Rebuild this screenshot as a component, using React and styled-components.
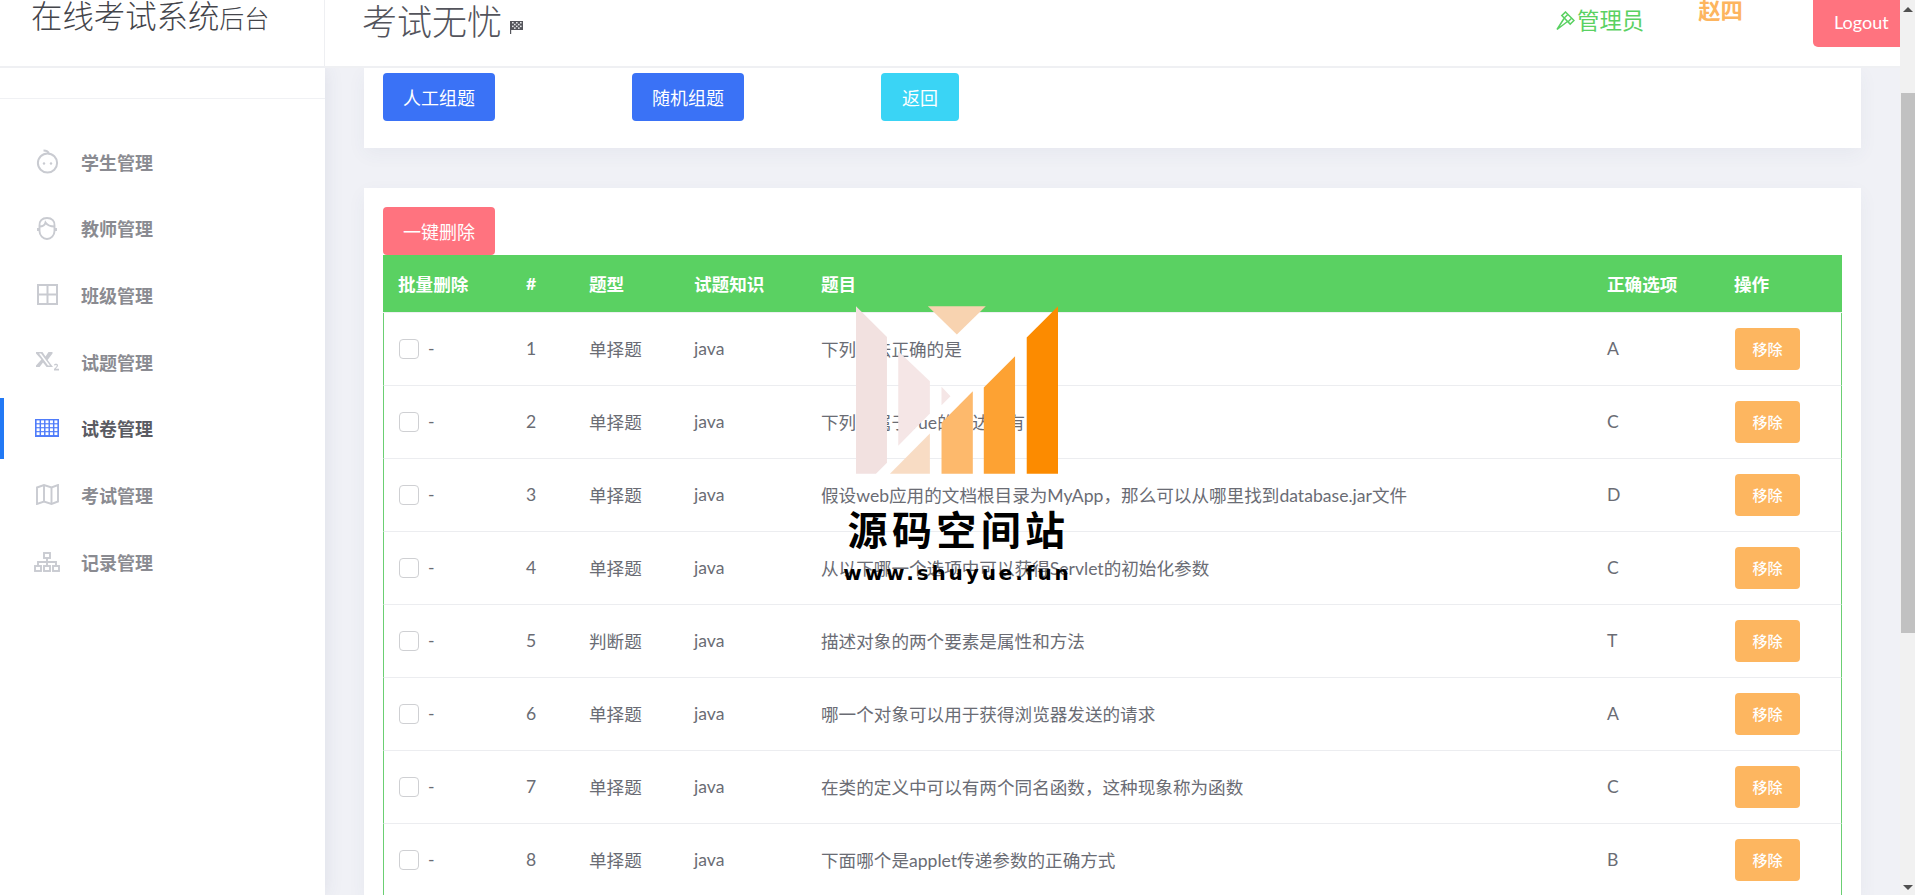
import React from "react";
import styled, { createGlobalStyle } from "styled-components";

const Global = createGlobalStyle`
  html, body { margin: 0; padding: 0; height: 100%; overflow: hidden; background: #fff; }
  body { font-family: Lato, "Noto Sans CJK SC", sans-serif; }
  * { box-sizing: border-box; }
`;

const Shell = styled.div`
  position: relative;
  display: flex;
  width: 1915px;
  height: 895px;
  overflow: hidden;
`;
const Page = styled.div`
  display: flex;
  flex-direction: column;
  width: 1900px;
  height: 100%;
`;
const TopBar = styled.header`
  display: flex;
  align-items: flex-start;
  flex: none;
  height: 68px;
  background: #fff;
  border-bottom: 2px solid #eff0f3;
  position: relative;
  z-index: 2;
`;
const Brand = styled.div`
  width: 325px;
  height: 66px;
  padding-left: 31px;
  border-right: 1px solid #eeeff2;
  font-size: 31.4px;
  line-height: 32px;
  font-weight: 300;
  color: #44454b;
  flex: none;
  small { font-size: 25px; }
`;
const PageTitle = styled.div`
  margin-left: 37px;
  font-size: 35px;
  line-height: 42px;
  font-weight: 300;
  color: #53545c;
  display: flex;
  align-items: center;
  gap: 8px;
`;
const Role = styled.div`
  display: flex;
  align-items: center;
  margin-left: auto;
  font-size: 22.4px;
  line-height: 42px;
  color: #5ad162;
`;
const UserName = styled.div`
  margin-left: 54px;
  font-size: 22.4px;
  line-height: 22px;
  font-weight: 700;
  color: #fdb55f;
`;
const Logout = styled.button`
  margin-left: 70px;
  width: 87px;
  height: 47px;
  padding: 0 10px 3px 21px;
  border: 0;
  border-radius: 0 0 0 5px;
  background: #ff737f;
  color: #fff;
  font: 400 18px Lato, sans-serif;
  text-align: left;
`;
const Body = styled.div`
  display: flex;
  flex: 1;
  min-height: 0;
`;
const Sidebar = styled.aside`
  flex: none;
  width: 325px;
  background: #fff;
  position: relative;
  z-index: 1;
  box-shadow: 0 0 18px rgba(60, 70, 110, 0.1);
`;
const SideRule = styled.div`
  height: 31px;
  border-bottom: 1px solid #f0f1f4;
`;
const NavList = styled.nav`
  display: flex;
  flex-direction: column;
  gap: 5.7px;
  padding-top: 32px;
`;
const NavItem = styled.a`
  position: relative;
  display: flex;
  align-items: center;
  height: 61px;
  padding-left: 34px;
  font-size: 18px;
  font-weight: 700;
  color: ${(p) => (p.$active ? "#5a5b62" : "#8a8b91")};
  &::before {
    content: "";
    display: ${(p) => (p.$active ? "block" : "none")};
    position: absolute;
    left: 0;
    top: 0;
    bottom: 0;
    width: 4px;
    background: #2279f5;
  }
`;
const NavIcon = styled.span`
  display: flex;
  align-items: center;
  justify-content: center;
  width: 26px;
  height: 26px;
  margin-right: 21px;
  color: #c9cbd1;
`;
const Main = styled.main`
  flex: 1;
  min-width: 0;
  padding: 0 39px;
  background: #f0f1f6;
  overflow: hidden;
`;
const Card = styled.section`
  background: #fff;
  padding: ${(p) => p.$pad};
  margin-bottom: 40px;
  box-shadow: 0 6px 18px rgba(60, 70, 110, 0.05);
`;
const ButtonRow = styled.div`
  display: flex;
  gap: 137px;
`;
const ActionButton = styled.button`
  display: block;
  width: ${(p) => p.$w || 112}px;
  height: 48px;
  padding: 0;
  border: 0;
  border-radius: 4px;
  background: ${(p) => p.$bg};
  color: #fff;
  font: 400 18px Lato, "Noto Sans CJK SC", sans-serif;
`;
const Table = styled.table`
  width: 1459px;
  border-collapse: separate;
  border-spacing: 0;
  table-layout: fixed;
`;
const Th = styled.th`
  height: 58px;
  padding: 0 15px 1px;
  background: #5ad162;
  border-bottom: 1px solid #eef0f2;
  color: #fff;
  font-size: 17.6px;
  font-weight: 700;
  text-align: left;
`;
const Row = styled.tr`
  td:first-child { border-left: 1px solid #6bcf73; }
  td:last-child { border-right: 1px solid #6bcf73; }
`;
const Td = styled.td`
  height: 73px;
  padding: 0 15px 1px;
  border-bottom: 1px solid #ecedf0;
  color: #6a6c74;
  font-size: 17.6px;
  font-weight: 400;
  white-space: nowrap;
`;
const SelectCell = styled.div`
  display: flex;
  align-items: center;
  gap: 9px;
`;
const Check = styled.input.attrs({ type: "checkbox" })`
  appearance: none;
  width: 20px;
  height: 20px;
  margin: 0;
  border: 1px solid #cfd0d3;
  border-radius: 4px;
  background: #fff;
`;
const RemoveButton = styled.button`
  display: block;
  width: 65px;
  height: 42px;
  margin-left: 1px;
  padding: 0;
  border: 0;
  border-radius: 4px;
  background: #fdb660;
  color: #fff;
  font: 500 15px "Noto Sans CJK SC", sans-serif;
`;
const ScrollTrack = styled.div`
  display: flex;
  flex-direction: column;
  align-items: flex-end;
  flex: none;
  width: 15px;
  height: 100%;
  padding: 7px 0 5px;
  background: #f1f1f1;
`;
const Arrow = styled.i`
  display: block;
  margin-right: 2px;
  margin-top: ${(p) => (p.$down ? "auto" : "0")};
  border-left: 5px solid transparent;
  border-right: 5px solid transparent;
  border-${(p) => (p.$down ? "top" : "bottom")}: 5px solid #505050;
`;
const Thumb = styled.div`
  width: 14px;
  height: 540px;
  margin-top: 81px;
  background: #c1c1c1;
`;
const Watermark = styled.div`
  position: absolute;
  left: 840px;
  top: 306px;
  width: 235px;
  display: flex;
  flex-direction: column;
  align-items: center;
  color: #000;
  pointer-events: none;
  z-index: 3;
`;
const WatermarkLogo = styled.svg`
  display: block;
  width: 202px;
  height: 168px;
  margin-left: -1px;
`;
const WatermarkTitle = styled.div`
  margin-top: 29px;
  margin-left: 2px;
  font-size: 40px;
  line-height: 50px;
  font-weight: 700;
  letter-spacing: 4.4px;
  white-space: nowrap;
  font-family: "Noto Sans CJK SC", sans-serif;
`;
const WatermarkUrl = styled.div`
  margin-top: 8px;
  font-size: 20px;
  line-height: 24px;
  font-weight: 700;
  letter-spacing: 2.9px;
  white-space: nowrap;
  font-family: "DejaVu Sans", sans-serif;
`;

const BabyIcon = () => (
  <svg width="23" height="25" viewBox="0 0 23 25" fill="none" stroke="currentColor" strokeWidth="2">
    <circle cx="11.5" cy="14" r="9.6" />
    <path d="M7.5 1.5c3 0 5.5 1.2 5 3.6" />
    <circle cx="8" cy="14.5" r="1.2" fill="currentColor" stroke="none" />
    <circle cx="15" cy="14.5" r="1.2" fill="currentColor" stroke="none" />
  </svg>
);
const ManIcon = () => (
  <svg width="20" height="23" viewBox="0 0 20 23" fill="none" stroke="currentColor" strokeWidth="1.9">
    <path d="M2.5 8.5C2 4 5 1 10 1s8 3 7.5 7.5V14c0 4.5-3.5 8-7.5 8s-7.5-3.5-7.5-8z" />
    <path d="M2.5 9.5C6 9.5 8 7.5 8.5 5.5c2 3 5 4 9 4" />
    <path d="M1 11v3M19 11v3" />
  </svg>
);
const GridIcon = () => (
  <svg width="21" height="21" viewBox="0 0 21 21" fill="none" stroke="currentColor" strokeWidth="2">
    <rect x="1" y="1" width="19" height="19" />
    <path d="M10.5 1v19M1 10.5h19" />
  </svg>
);
const SubscriptIcon = () => (
  <svg width="23" height="19" viewBox="0 0 23 19" fill="currentColor">
    <path fillRule="evenodd" d="M0 0h6.5l3 4.6L12.5 0h4v1.4L11.6 8l5.4 7h-6.4L7 10.4 3.6 15H0v-1.4L5.4 7.4 0 1.4zM3 1.4 12 13.6h2L5 1.4z" />
    <path d="M18 12.5c.6-1 3.6-1.2 4 .6.3 1.5-1.3 2.6-2.2 3.6H23V18.5h-5v-1.4c1.2-1.3 2.9-2.7 2.7-3.6-.2-.8-1.5-.6-2 .2z" />
  </svg>
);
const CalendarGridIcon = () => (
  <svg width="24" height="18" viewBox="0 0 24 18">
    <rect width="24" height="18" fill="#4f7cfa" />
    {[0, 1, 2, 3].map((r) =>
      [0, 1, 2, 3, 4].map((c) => (
        <rect key={`${r}-${c}`} x={1.6 + c * 4.45} y={1.4 + r * 3.95} width="3" height="2.8" fill="#fff" />
      ))
    )}
  </svg>
);
const MapIcon = () => (
  <svg width="23" height="21" viewBox="0 0 23 21" fill="none" stroke="currentColor" strokeWidth="1.9">
    <path d="M1 3.5 8 1l7.5 2.5L22 1v16.5L15.5 20 8 17.5 1 20z" />
    <path d="M8 1v16.5M15.5 3.5V20" />
  </svg>
);
const SitemapIcon = () => (
  <svg width="26" height="20" viewBox="0 0 26 20" fill="none" stroke="currentColor" strokeWidth="1.9">
    <rect x="10" y="1" width="6" height="5" />
    <rect x="1" y="14" width="6" height="5" />
    <rect x="10" y="14" width="6" height="5" />
    <rect x="19" y="14" width="6" height="5" />
    <path d="M13 6v8M4 14v-4h18v4" />
  </svg>
);
const HammerIcon = () => (
  <svg width="19" height="20" viewBox="0 0 19 20" fill="none" stroke="currentColor" strokeWidth="1.5" style={{ marginRight: 2 }}>
    <path d="M9.5 1 18 9.5l-3.8 3.6L5.8 4.6z" />
    <path d="M8 7.5 1 18.5 11.5 10.5" />
    <path d="M11.8 3.5 8.2 7M15.6 7.3l-3.5 3.5" />
  </svg>
);
const FlagIcon = () => (
  <svg width="13" height="13" viewBox="0 0 13 13" style={{ marginTop: 12 }}>
    <rect x="0" y="0" width="13" height="9" fill="#55565c" />
    <rect x="0" y="0" width="1.2" height="13" fill="#55565c" />
    {[0, 1, 2, 3].map((r) =>
      [0, 1, 2, 3, 4].map((c) =>
        (r + c) % 2 === 0 ? (
          <rect key={`${r}-${c}`} x={2 + c * 2} y={1 + r * 1.8} width="1.6" height="1.5" fill="#e6e6e8" />
        ) : null
      )
    )}
  </svg>
);

const navItems = [
  ["学生管理", <BabyIcon />],
  ["教师管理", <ManIcon />],
  ["班级管理", <GridIcon />],
  ["试题管理", <SubscriptIcon />],
  ["试卷管理", <CalendarGridIcon />, true],
  ["考试管理", <MapIcon />],
  ["记录管理", <SitemapIcon />],
];

const columns = [128, 63, 105, 127, 786, 127, 123];
const headers = ["批量删除", "#", "题型", "试题知识", "题目", "正确选项", "操作"];
const rows = [
  ["单择题", "下列说法正确的是", "A"],
  ["单择题", "下列不属于vue的表达式有", "C"],
  ["单择题", "假设web应用的文档根目录为MyApp，那么可以从哪里找到database.jar文件", "D"],
  ["单择题", "从以下哪一个选项中可以获得Servlet的初始化参数", "C"],
  ["判断题", "描述对象的两个要素是属性和方法", "T"],
  ["单择题", "哪一个对象可以用于获得浏览器发送的请求", "A"],
  ["单择题", "在类的定义中可以有两个同名函数，这种现象称为函数", "C"],
  ["单择题", "下面哪个是applet传递参数的正确方式", "B"],
];

export default function App() {
  return (
    <Shell>
      <Global />
      <Page>
        <TopBar>
          <Brand>在线考试系统<small>后台</small></Brand>
          <PageTitle>考试无忧<FlagIcon /></PageTitle>
          <Role><HammerIcon />管理员</Role>
          <UserName>赵四</UserName>
          <Logout>Logout</Logout>
        </TopBar>
        <Body>
          <Sidebar>
            <SideRule />
            <NavList>
              {navItems.map(([label, icon, active]) => (
                <NavItem key={label} $active={active}>
                  <NavIcon>{icon}</NavIcon>
                  {label}
                </NavItem>
              ))}
            </NavList>
          </Sidebar>
          <Main>
            <Card $pad="5px 19px 27px">
              <ButtonRow>
                <ActionButton $bg="#3a72f6">人工组题</ActionButton>
                <ActionButton $bg="#3a72f6">随机组题</ActionButton>
                <ActionButton $bg="#3ad4f5" $w={78}>返回</ActionButton>
              </ButtonRow>
            </Card>
            <Card $pad="19px 19px 0">
              <ActionButton $bg="#ff737f">一键删除</ActionButton>
              <Table>
                <colgroup>
                  {columns.map((w, i) => (
                    <col key={i} width={w} />
                  ))}
                </colgroup>
                <thead>
                  <tr>
                    {headers.map((h) => (
                      <Th key={h}>{h}</Th>
                    ))}
                  </tr>
                </thead>
                <tbody>
                  {rows.map(([type, title, answer], i) => (
                    <Row key={i}>
                      <Td>
                        <SelectCell>
                          <Check />-
                        </SelectCell>
                      </Td>
                      <Td>{i + 1}</Td>
                      <Td>{type}</Td>
                      <Td>java</Td>
                      <Td>{title}</Td>
                      <Td>{answer}</Td>
                      <Td>
                        <RemoveButton>移除</RemoveButton>
                      </Td>
                    </Row>
                  ))}
                </tbody>
              </Table>
            </Card>
          </Main>
        </Body>
      </Page>
      <ScrollTrack>
        <Arrow />
        <Thumb />
        <Arrow $down />
      </ScrollTrack>
      <Watermark>
        <WatermarkLogo viewBox="228 78 607 503">
          <polygon points="228,78 321,170 321,548 288,581 228,581" fill="#f2e1e0" />
          <polygon points="355,213 450,303 450,400 355,497" fill="#f5e6e6" />
          <polygon points="485,320 512,348 485,375" fill="#f5e6e6" />
          <polygon points="444,78 618,78 531,163" fill="#f8d3b0" />
          <polygon points="330,581 450,460 450,581" fill="#f8dcc4" />
          <polygon points="485,428 579,333 579,581 485,581" fill="#fdb96c" />
          <polygon points="612,322 706,228 706,581 612,581" fill="#fda233" />
          <polygon points="741,172 835,78 835,581 741,581" fill="#fc8b00" />
        </WatermarkLogo>
        <WatermarkTitle>源码空间站</WatermarkTitle>
        <WatermarkUrl>www.shuyue.fun</WatermarkUrl>
      </Watermark>
    </Shell>
  );
}
